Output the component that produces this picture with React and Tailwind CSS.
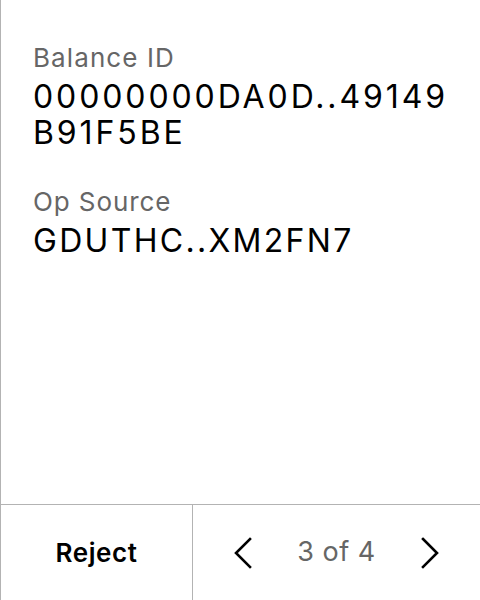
import React from "react";

function Chevron({ dir }) {
  return (
    <svg width="20" height="32" viewBox="0 0 20 32" fill="none" stroke="#000" strokeWidth="2.6" strokeLinecap="square">
      {dir === "left" ? <path d="M17 2 L3 16 L17 30" /> : <path d="M3 2 L17 16 L3 30" />}
    </svg>
  );
}

export default function App() {
  return (
    <div className="w-[480px] h-[600px] bg-white flex flex-col border-l border-[#b3b3b3]" style={{ fontFamily: "Inter, 'Noto Sans', sans-serif" }}>
      <div className="flex-1 flex flex-col gap-[35px] pl-[32px] pt-[42px]">
        <div className="flex flex-col">
          <div className="text-[26px] leading-[32px] tracking-[1.1px] text-[#666666]">Balance ID</div>
          <div className="mt-[5px] text-[32px] leading-[36px] tracking-[2.9px] text-black">
            00000000DA0D..49149
            <br />
            B91F5BE
          </div>
        </div>
        <div className="flex flex-col">
          <div className="text-[26px] leading-[32px] tracking-[0.9px] text-[#666666]">Op Source</div>
          <div className="mt-[5px] text-[32px] leading-[36px] tracking-[2.3px] text-black">GDUTHC..XM2FN7</div>
        </div>
      </div>
      <div className="h-[96px] flex border-t border-[#b3b3b3]">
        <div className="w-[192px] flex items-center justify-center border-r border-[#b3b3b3]">
          <span className="text-[26px] font-semibold tracking-[0.6px] text-black">Reject</span>
        </div>
        <div className="flex-1 flex items-center justify-center gap-[44px]">
          <Chevron dir="left" />
          <span className="text-[27px] tracking-[0.5px] text-[#666666]">3 of 4</span>
          <Chevron dir="right" />
        </div>
      </div>
    </div>
  );
}
